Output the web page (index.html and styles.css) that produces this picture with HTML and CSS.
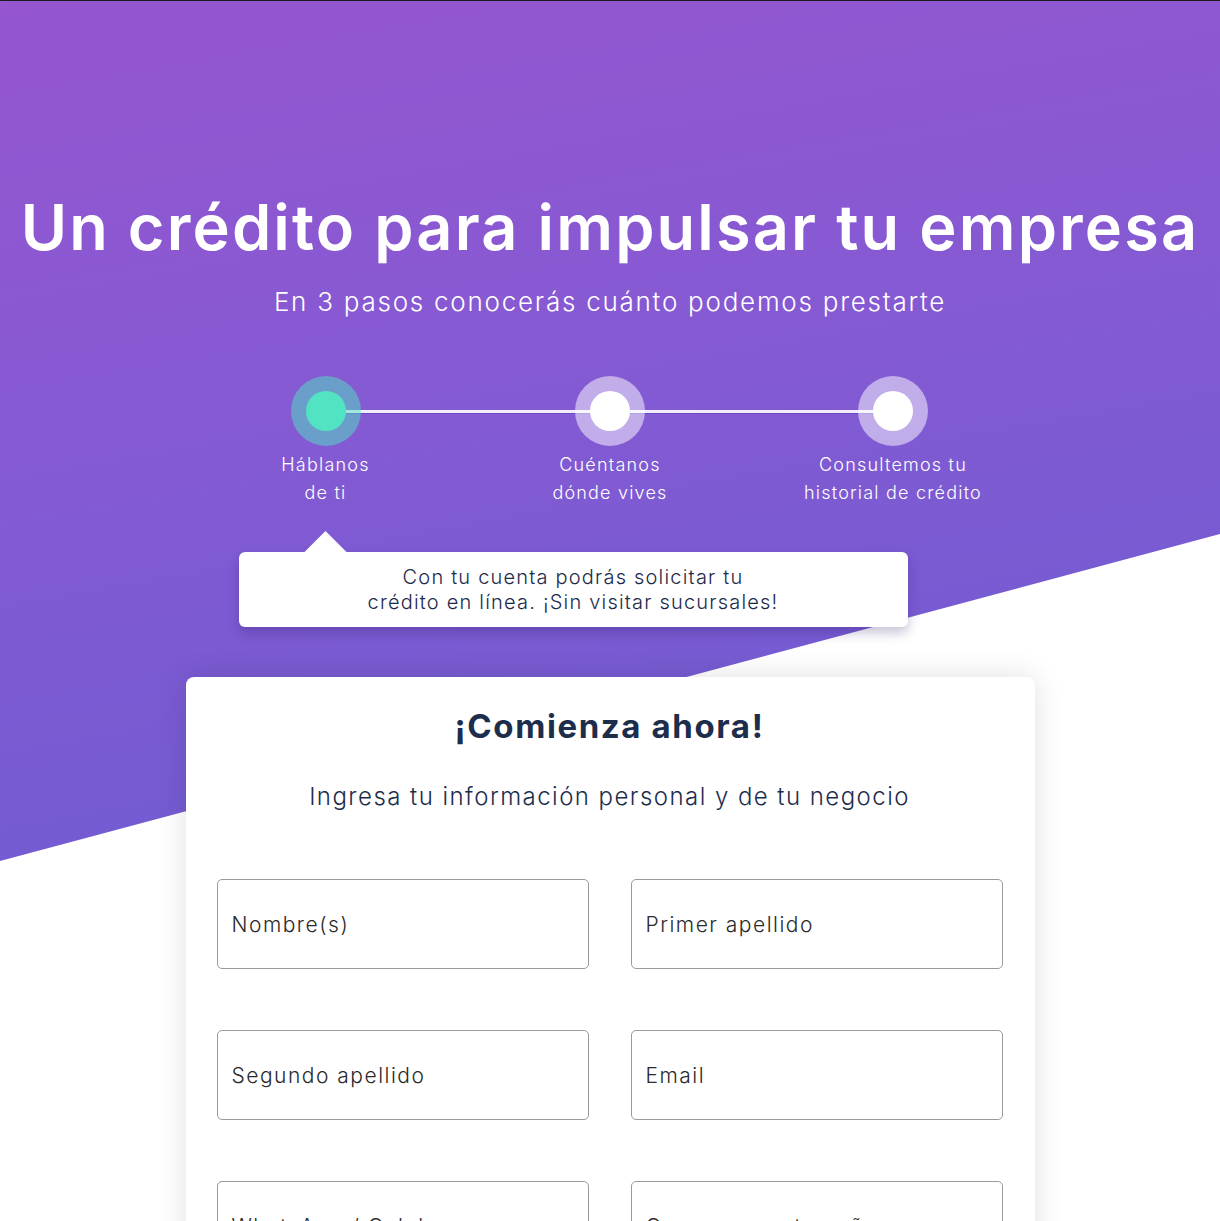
FILE: index.html
```html
<!DOCTYPE html>
<html lang="es">
<head>
<meta charset="utf-8">
<title>Un crédito para impulsar tu empresa</title>
<link rel="stylesheet" href="styles.css">
</head>
<body>
<div class="page">
  <div class="bg"></div>
  <header class="hero">
    <h1 class="title">Un crédito para impulsar tu empresa</h1>
    <p class="lead">En 3 pasos conocerás cuánto podemos prestarte</p>
  </header>
  <main class="main">
    <ol class="steps">
      <li class="step active"><span class="dot"></span><span class="label">Háblanos<br>de ti</span></li>
      <li class="step"><span class="dot"></span><span class="label">Cuéntanos<br>dónde vives</span></li>
      <li class="step"><span class="dot"></span><span class="label">Consultemos tu<br>historial de crédito</span></li>
    </ol>
    <div class="tip">Con tu cuenta podrás solicitar tu<br>crédito en línea. ¡Sin visitar sucursales!</div>
    <section class="card">
      <h2 class="card-title">¡Comienza ahora!</h2>
      <p class="card-sub">Ingresa tu información personal y de tu negocio</p>
      <form class="fields">
        <input class="field" type="text" placeholder="Nombre(s)">
        <input class="field" type="text" placeholder="Primer apellido">
        <input class="field" type="text" placeholder="Segundo apellido">
        <input class="field" type="email" placeholder="Email">
        <input class="field" type="tel" placeholder="WhatsApp / Celular">
        <input class="field" type="password" placeholder="Crea una contraseña">
      </form>
    </section>
  </main>
</div>
</body>
</html>
```

FILE: styles.css
```css
* { box-sizing: border-box; }
html, body { margin: 0; padding: 0; }
body {
  background: #ffffff;
  font-family: Inter, "Noto Sans", sans-serif;
  color: #1d2d4c;
}
.page {
  position: relative;
  border-top: 1px solid #1b1b1b;
  min-height: 1500px;
}
.bg {
  position: absolute;
  top: 0; left: 0; right: 0;
  height: 860px;
  background: linear-gradient(170deg, #9556d0 0%, #845ad3 45%, #6b5cd1 100%);
  clip-path: polygon(0 0, 100% 0, 100% 533px, 0 100%);
}
.hero {
  position: relative;
  padding-top: 188px;
  text-align: center;
  color: #fff;
}
.title {
  margin: 0;
  font-size: 63px;
  line-height: 76px;
  font-weight: 600;
  letter-spacing: 2.15px;
}
.lead {
  margin: 20px 0 0;
  font-size: 26px;
  line-height: 34px;
  font-weight: 300;
  letter-spacing: 1.75px;
}
.main {
  position: relative;
  width: 849px;
  margin: 0 auto;
}
.steps {
  position: relative;
  list-style: none;
  margin: 57px 0 0;
  padding: 0;
  display: grid;
  grid-template-columns: repeat(3, 1fr);
}
.steps::before {
  content: "";
  position: absolute;
  top: 34px;
  left: 16.67%;
  right: 16.67%;
  height: 3px;
  background: #f1edfb;
  box-shadow: 0 1px 0 #6b45c6;
}
.step {
  position: relative;
  display: flex;
  flex-direction: column;
  align-items: center;
}
.step:first-child { margin-left: -3px; }
.dot {
  width: 70px;
  height: 70px;
  border-radius: 50%;
  background: rgba(255, 255, 255, 0.5);
  display: flex;
  align-items: center;
  justify-content: center;
}
.dot::after {
  content: "";
  width: 40px;
  height: 40px;
  border-radius: 50%;
  background: #fff;
}
.step.active .dot { background: rgba(80, 227, 194, 0.5); }
.step.active .dot::after { background: #52e3c2; }
.label {
  margin-top: 5px;
  font-size: 18px;
  line-height: 28px;
  font-weight: 300;
  letter-spacing: 1.2px;
  color: #fff;
  text-align: center;
}
.tip {
  position: relative;
  margin: 45px 0 0 53px;
  width: 669px;
  background: #fff;
  border-radius: 6px;
  padding: 12.5px 0;
  text-align: center;
  font-size: 20px;
  line-height: 25px;
  font-weight: 300;
  letter-spacing: 1.2px;
  color: #1c2a4a;
  box-shadow: 0 6px 12px rgba(40, 20, 90, 0.25);
}
.tip::before {
  content: "";
  position: absolute;
  top: -21px;
  left: 65px;
  width: 44px;
  height: 22px;
  background: #fff;
  clip-path: polygon(50% 0, 100% 100%, 0 100%);
}
.card {
  margin-top: 50px;
  background: #fff;
  border-radius: 8px;
  box-shadow: 0 0 30px rgba(0, 0, 0, 0.12);
  padding: 29px 32px 60px 31px;
}
.card-title {
  margin: 0;
  text-align: center;
  font-size: 33px;
  line-height: 40px;
  font-weight: 700;
  letter-spacing: 1.6px;
  color: #1d2d4c;
}
.card-sub {
  margin: 36px 0 0;
  text-align: center;
  font-size: 24px;
  line-height: 30px;
  font-weight: 300;
  letter-spacing: 1.45px;
  color: #1d2d4c;
}
.fields {
  margin-top: 67px;
  display: grid;
  grid-template-columns: 1fr 1fr;
  column-gap: 42px;
  row-gap: 61px;
}
.field {
  height: 90px;
  border: 1px solid #9a9a9a;
  border-radius: 5px;
  padding: 0 14px;
  font-family: Inter, "Noto Sans", sans-serif;
  font-size: 21px;
  font-weight: 300;
  letter-spacing: 1.5px;
  color: #2a2a2a;
  background: #fff;
}
.field::placeholder { color: #2a2a2a; opacity: 1; }
```
